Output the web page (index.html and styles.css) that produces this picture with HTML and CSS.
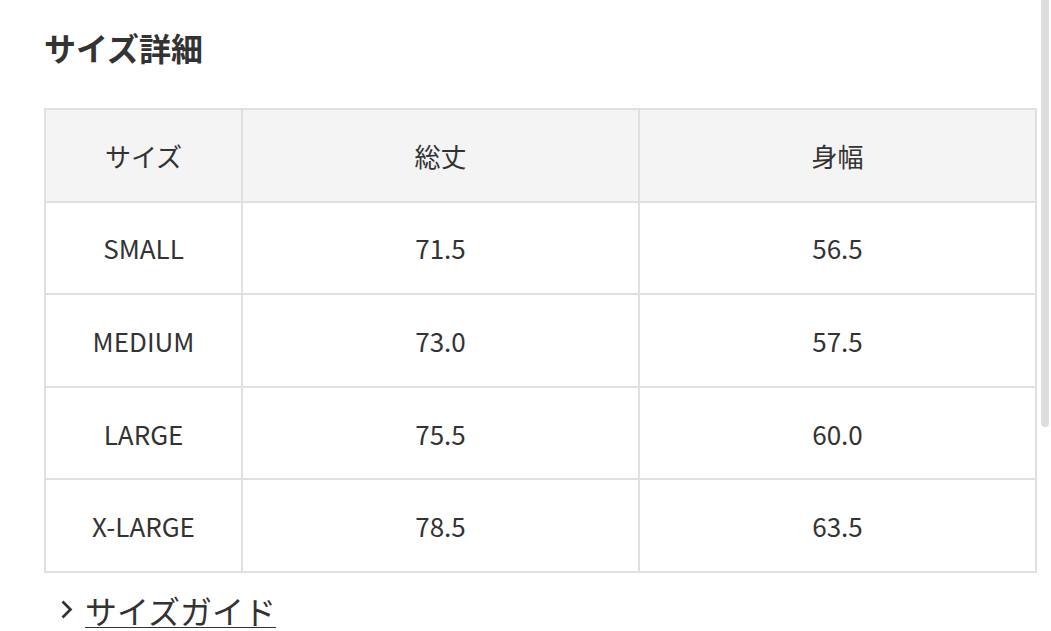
FILE: index.html
```html
<!DOCTYPE html>
<html lang="ja">
<head>
<meta charset="utf-8">
<link rel="stylesheet" href="styles.css">
</head>
<body>
<div class="page">
  <h2 class="title">サイズ詳細</h2>
  <table class="size-table">
    <colgroup><col class="c1"><col><col></colgroup>
    <thead>
      <tr><th>サイズ</th><th>総丈</th><th>身幅</th></tr>
    </thead>
    <tbody>
      <tr><td>SMALL</td><td>71.5</td><td>56.5</td></tr>
      <tr><td>MEDIUM</td><td>73.0</td><td>57.5</td></tr>
      <tr><td>LARGE</td><td>75.5</td><td>60.0</td></tr>
      <tr><td>X-LARGE</td><td>78.5</td><td>63.5</td></tr>
    </tbody>
  </table>
  <a class="guide" href="#">
    <svg class="chev" width="15" height="22" viewBox="0 0 15 22"><path d="M3.5 2.5 L11.5 10.5 L3.5 18.5" fill="none" stroke="#333" stroke-width="2.7"/></svg>
    <span class="guide-text">サイズガイド</span>
  </a>
</div>
<div class="scroll-thumb"></div>
</body>
</html>
```
FILE: styles.css
```css
html, body {
  margin: 0;
  padding: 0;
  background: #fff;
  overflow: hidden;
}
body {
  font-family: "Noto Sans CJK JP", "Noto Sans", sans-serif;
  color: #333;
}
.page {
  padding: 22px 14px 0 44px;
}
.title {
  margin: 0 0 35px 0;
  font-size: 32px;
  font-weight: 700;
  line-height: 51px;
}
.size-table {
  width: 993px;
  border-collapse: collapse;
  table-layout: fixed;
  font-size: 26px;
}
.c1 { width: 197px; }
.size-table th,
.size-table td {
  border: 2px solid #e0e0e0;
  height: 90.6px;
  padding: 0;
  text-align: center;
  font-weight: 400;
}
.size-table th {
  background: #f4f4f4;
}
.guide {
  display: flex;
  align-items: center;
  gap: 11px;
  margin-top: 19px;
  padding-left: 15px;
  color: #333;
  text-decoration: none;
  font-size: 32px;
  line-height: 36px;
}
.chev { display: block; }
.guide-text {
  text-decoration: underline;
  text-decoration-thickness: 2px;
  text-underline-offset: 3px;
}
.scroll-thumb {
  position: absolute;
  left: 1041px;
  top: 0;
  width: 8px;
  height: 427px;
  background: #dedede;
  border-radius: 0 0 4px 4px;
}
```
